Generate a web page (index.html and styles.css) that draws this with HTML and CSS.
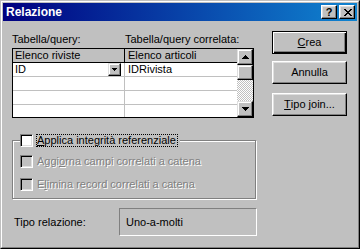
FILE: index.html
```html
<!DOCTYPE html>
<html>
<head>
<meta charset="utf-8">
<title>Relazione</title>
<link rel="stylesheet" href="styles.css">
</head>
<body>
<div class="win">
  <div class="frame">
    <div class="titlebar">
      <span class="title">Relazione</span>
      <div class="capbtns">
        <span class="capbtn help">?</span>
        <span class="capbtn close">
          <svg width="8" height="7" viewBox="0 0 8 7" shape-rendering="crispEdges"><path d="M0 0h2v1h-2zM6 0h2v1h-2zM1 1h2v1h-2zM5 1h2v1h-2zM2 2h4v1h-4zM3 3h2v1h-2zM2 4h4v1h-4zM1 5h2v1h-2zM5 5h2v1h-2zM0 6h2v1h-2zM6 6h2v1h-2z" fill="#000"/></svg>
        </span>
      </div>
    </div>
    <div class="content">
      <div class="left">
        <div class="labels">
          <span class="lab1">Tabella/query:</span>
          <span>Tabella/query correlata:</span>
        </div>
        <div class="grid">
          <div class="table">
            <div class="row head"><div class="c1">Elenco riviste</div><div class="c2">Elenco articoli</div></div>
            <div class="row"><div class="c1 combo"><span>ID</span><span class="dd"><svg width="5" height="3" viewBox="0 0 5 3" shape-rendering="crispEdges"><path d="M0 0h5v1h-5zM1 1h3v1h-3zM2 2h1v1h-1z" fill="#000"/></svg></span></div><div class="c2">IDRivista</div></div>
            <div class="row"><div class="c1"></div><div class="c2"></div></div>
            <div class="row"><div class="c1"></div><div class="c2"></div></div>
            <div class="row last"><div class="c1"></div><div class="c2"></div></div>
          </div>
          <div class="vscroll">
            <span class="sbtn"><svg width="7" height="4" viewBox="0 0 7 4" shape-rendering="crispEdges"><path d="M3 0h1v1h-1zM2 1h3v1h-3zM1 2h5v1h-5zM0 3h7v1h-7z" fill="#000"/></svg></span>
            <span class="thumb"></span>
            <span class="track"></span>
            <span class="sbtn"><svg width="7" height="4" viewBox="0 0 7 4" shape-rendering="crispEdges"><path d="M0 0h7v1h-7zM1 1h5v1h-5zM2 2h3v1h-3zM3 3h1v1h-1z" fill="#000"/></svg></span>
          </div>
        </div>
        <div class="group">
          <div class="legend">
            <span class="chk"></span>
            <span class="focus"><u>A</u>pplica integrità referenziale</span>
          </div>
          <div class="opt first">
            <span class="chk off"></span>
            <span class="dis">Aggi<u>o</u>rna campi correlati a catena</span>
          </div>
          <div class="opt second">
            <span class="chk off"></span>
            <span class="dis">E<u>l</u>imina record correlati a catena</span>
          </div>
        </div>
        <div class="reltype">
          <span class="rlabel">Tipo relazione:</span>
          <span class="rfield">Uno-a-molti</span>
        </div>
      </div>
      <div class="right">
        <span class="btn default crea"><u>C</u>rea</span>
        <span class="btn annulla">Annulla</span>
        <span class="btn tipo"><u>T</u>ipo join...</span>
      </div>
    </div>
  </div>
</div>
</body>
</html>
```

FILE: styles.css
```css
html, body {
  margin: 0;
  padding: 0;
  background: #c0c0c0;
}
body {
  font-family: "Liberation Sans", Arial, sans-serif;
  font-size: 11px;
  color: #000;
}
.win {
  width: 360px;
  height: 249px;
  box-sizing: border-box;
  border: 1px solid;
  border-color: #c0c0c0 #000 #000 #c0c0c0;
  background: #c0c0c0;
}
.frame {
  height: 100%;
  box-sizing: border-box;
  border: 1px solid;
  border-color: #fff #808080 #808080 #fff;
  padding: 1px;
  display: flex;
  flex-direction: column;
}
.titlebar {
  height: 18px;
  flex: none;
  display: flex;
  align-items: center;
  justify-content: space-between;
  padding: 0 2px 0 3px;
  background: linear-gradient(to right, #000080, #1084d0);
}
.title {
  color: #fff;
  font-weight: bold;
  font-size: 12px;
  line-height: 14px;
}
.capbtns {
  display: flex;
  gap: 2px;
}
.capbtn {
  width: 16px;
  height: 14px;
  box-sizing: border-box;
  border: 1px solid;
  border-color: #fff #000 #000 #fff;
  box-shadow: inset -1px -1px #808080, inset 1px 1px #dfdfdf;
  background: #c0c0c0;
  display: flex;
  align-items: center;
  justify-content: center;
}
.help {
  font-weight: bold;
  font-size: 11px;
  line-height: 11px;
  padding-top: 1px;
}
.close svg {
  margin-left: 1px;
}
.content {
  flex: 1;
  display: flex;
  padding-left: 9px;
}
.left {
  width: 245px;
  display: flex;
  flex-direction: column;
}
.labels {
  display: flex;
  margin-top: 12px;
  height: 13px;
  line-height: 13px;
  margin-bottom: 2px;
  white-space: nowrap;
}
.lab1 {
  width: 113px;
}
.grid {
  width: 242px;
  height: 70px;
  box-sizing: border-box;
  border: 1px solid #000;
  display: flex;
  background: #fff;
}
.table {
  width: 224px;
  display: flex;
  flex-direction: column;
}
.row {
  display: flex;
  height: 13px;
  line-height: 13px;
  border-bottom: 1px solid #c0c0c0;
  background: #fff;
}
.row.last {
  height: 12px;
  border-bottom: 0;
}
.row.head {
  background: #c0c0c0;
  border-bottom-color: #000;
}
.c1 {
  width: 109px;
  padding-left: 2px;
  border-right: 1px solid #c0c0c0;
  white-space: nowrap;
}
.head .c1 {
  border-right-color: #000;
}
.c2 {
  width: 109px;
  padding-left: 3px;
  white-space: nowrap;
  overflow: hidden;
}
.combo {
  display: flex;
  justify-content: space-between;
}
.dd {
  width: 13px;
  height: 13px;
  box-sizing: border-box;
  margin-right: 3px;
  border: 1px solid;
  border-color: #dfdfdf #000 #000 #dfdfdf;
  box-shadow: inset -1px -1px #808080, inset 1px 1px #fff;
  background: #c0c0c0;
  display: flex;
  align-items: center;
  justify-content: center;
}
.vscroll {
  width: 16px;
  display: flex;
  flex-direction: column;
}
.sbtn, .thumb {
  height: 16px;
  flex: none;
  box-sizing: border-box;
  border: 1px solid;
  border-color: #dfdfdf #000 #000 #dfdfdf;
  box-shadow: inset -1px -1px #808080, inset 1px 1px #fff;
  background: #c0c0c0;
  display: flex;
  align-items: center;
  justify-content: center;
}
.thumb {
  height: 15px;
}
.track {
  flex: 1;
  background: repeating-conic-gradient(#c0c0c0 0 25%, #fff 0 50%) 0 0 / 2px 2px;
}
.group {
  margin-top: 22px;
  width: 244px;
  height: 59px;
  box-sizing: border-box;
  border: 1px solid #808080;
  box-shadow: inset 1px 1px #fff, 1px 1px #fff;
  padding-left: 7px;
  display: flex;
  flex-direction: column;
  align-items: flex-start;
}
.legend {
  margin-top: -7px;
  display: flex;
  align-items: center;
  background: #c0c0c0;
  padding-right: 2px;
  height: 13px;
}
.chk {
  width: 13px;
  height: 13px;
  box-sizing: border-box;
  border: 1px solid;
  border-color: #808080 #fff #fff #808080;
  box-shadow: inset 1px 1px #000, inset -1px -1px #dfdfdf;
  background: #fff;
  flex: none;
}
.chk.off {
  background: #c0c0c0;
}
.focus {
  margin-left: 3px;
  height: 13px;
  box-sizing: border-box;
  border: 1px dotted #000;
  line-height: 11px;
  padding: 0 1px 0 0;
  white-space: nowrap;
}
.opt {
  display: flex;
  align-items: center;
  height: 13px;
  white-space: nowrap;
}
.opt.first {
  margin-top: 8px;
}
.opt.second {
  margin-top: 10px;
}
.dis {
  margin-left: 4px;
  color: #808080;
  text-shadow: 1px 1px 0 #fff;
  line-height: 13px;
}
.reltype {
  margin-top: 9px;
  display: flex;
  align-items: center;
}
.rlabel {
  width: 105px;
  padding-left: 2px;
}
.rfield {
  width: 138px;
  height: 28px;
  box-sizing: border-box;
  border: 1px solid;
  border-color: #808080 #fff #fff #808080;
  padding-left: 6px;
  line-height: 26px;
}
.right {
  margin-left: 15px;
  display: flex;
  flex-direction: column;
}
.btn {
  width: 75px;
  height: 23px;
  box-sizing: border-box;
  border: 1px solid;
  border-color: #fff #000 #000 #fff;
  box-shadow: inset -1px -1px #808080, inset 1px 1px #dfdfdf;
  background: #c0c0c0;
  display: flex;
  align-items: center;
  justify-content: center;
  line-height: 13px;
}
.btn.default {
  border-color: #000;
  box-shadow: inset 1px 1px #fff, inset -1px -1px #000, inset -2px -2px #808080;
}
.crea {
  margin-top: 10px;
}
.annulla {
  margin-top: 7px;
}
.tipo {
  margin-top: 9px;
}
```
